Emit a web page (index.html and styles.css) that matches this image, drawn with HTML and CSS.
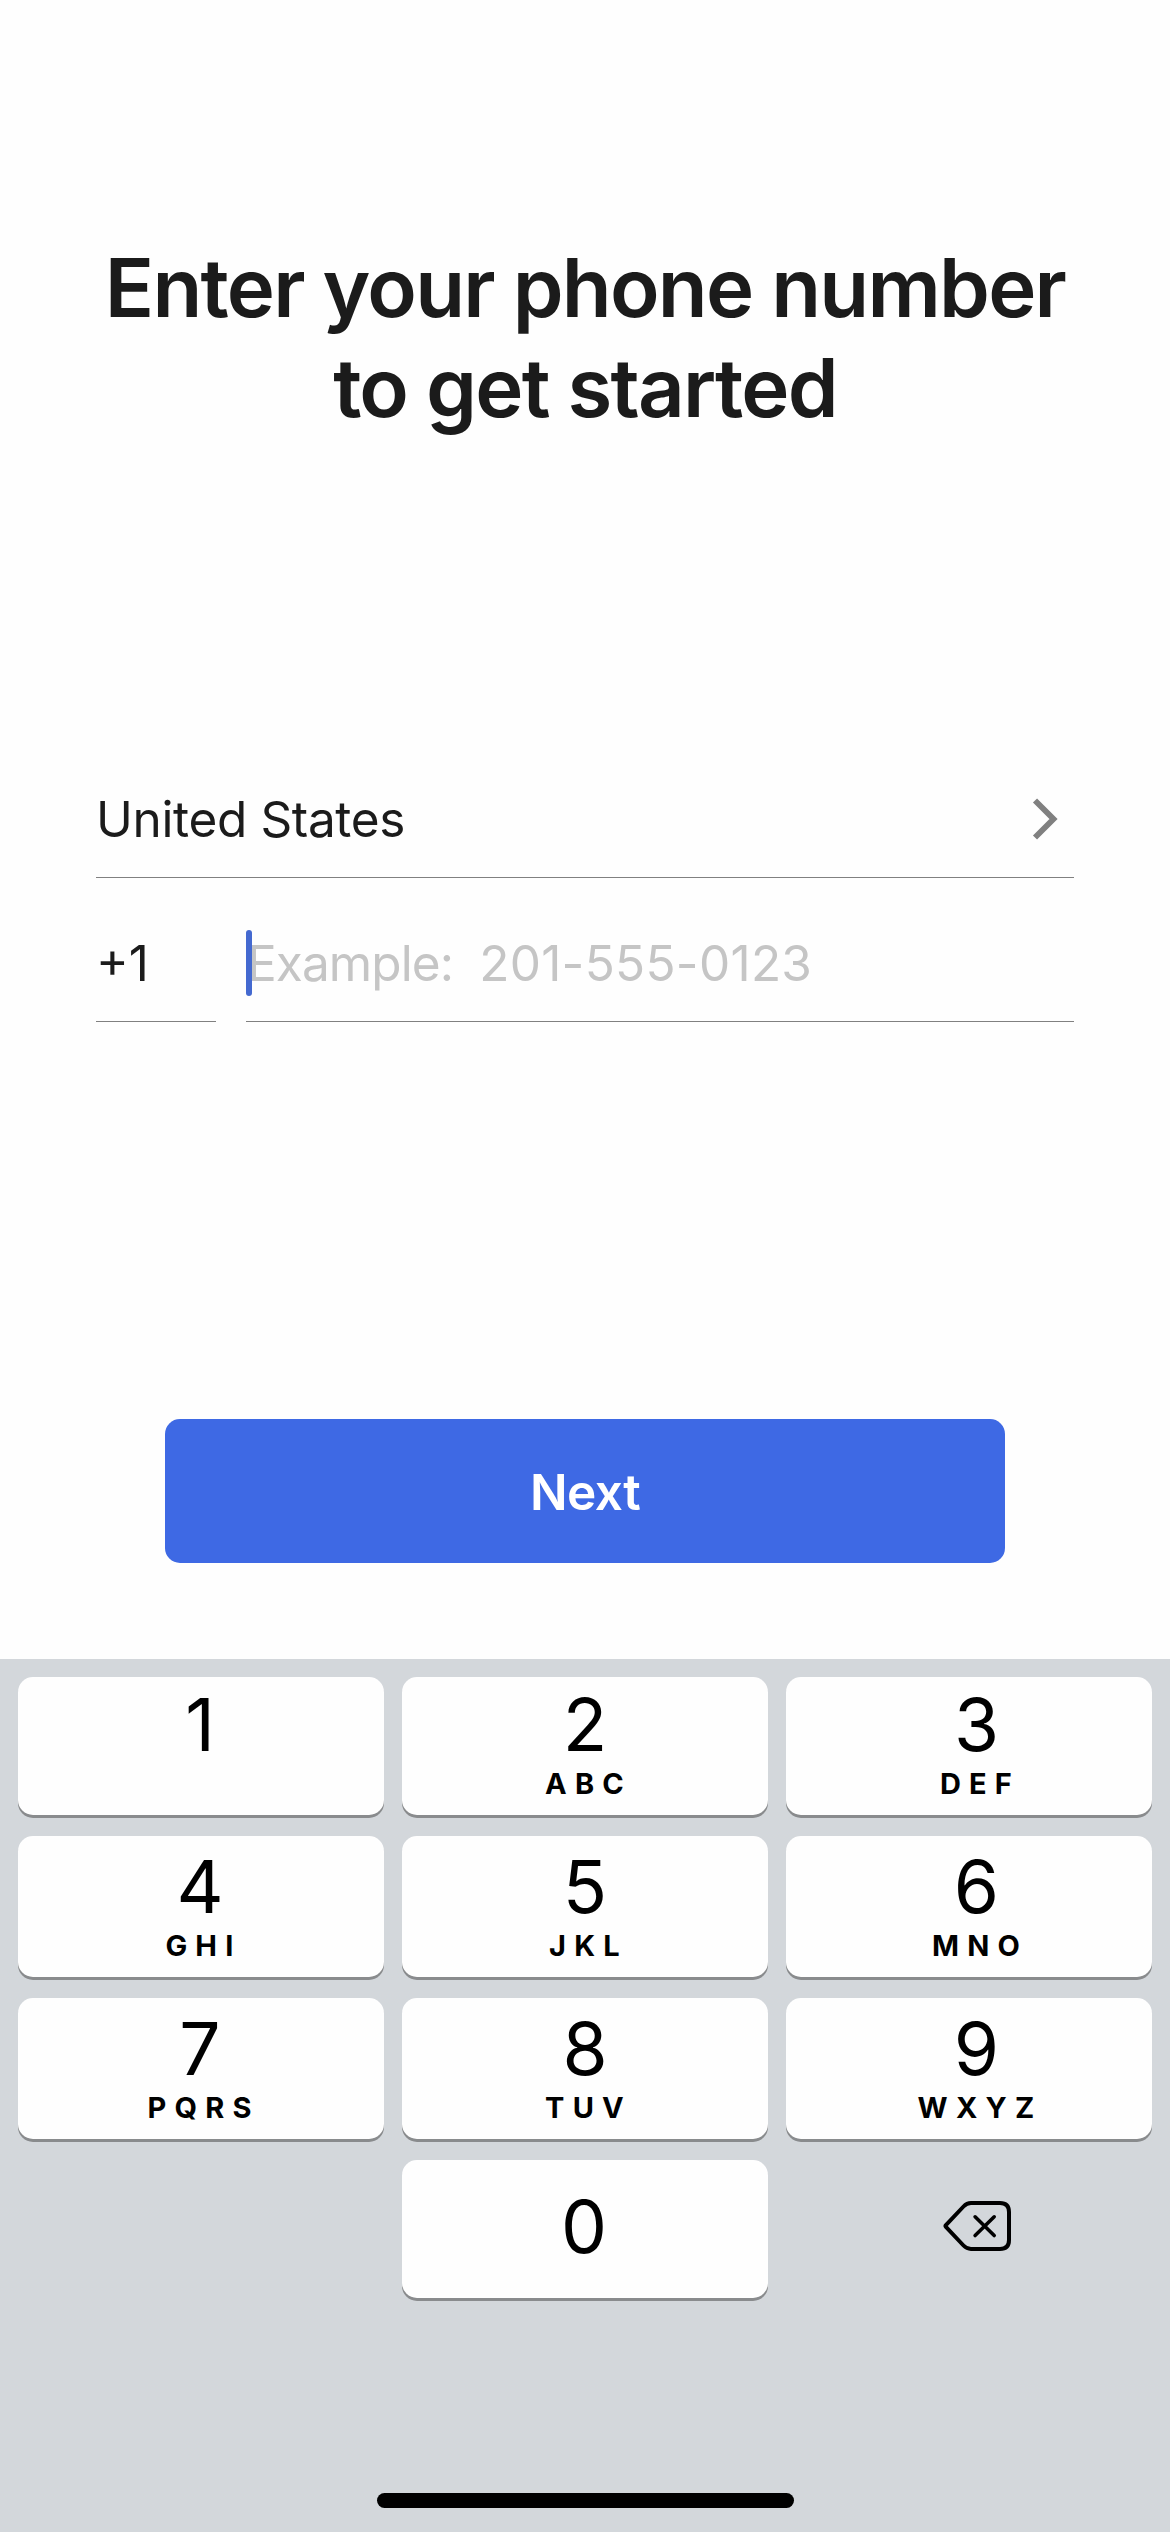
FILE: index.html
```html
<!DOCTYPE html>
<html lang="en">
<head>
<meta charset="utf-8">
<meta name="viewport" content="width=device-width">
<title>Phone number</title>
<link rel="stylesheet" href="styles.css">
</head>
<body>
<main class="screen">
  <h1 class="title">Enter your phone number<br>to get started</h1>
  <form class="form">
    <div class="field country">
      <span class="country-name">United States</span>
      <svg class="chevron" viewBox="0 0 26 42" width="26" height="42" aria-hidden="true"><path d="M3 2.5 21.500 21 3 39.500" fill="none" stroke="#808080" stroke-width="5.800"/></svg>
    </div>
    <div class="number-row">
      <div class="field code"><span class="code-text">+1</span></div>
      <div class="field number"><span class="caret"></span><span class="hint-label">Example:</span><span class="hint-number">201-555-0123</span></div>
    </div>
    <button class="next" type="button"><span class="next-text">Next</span></button>
  </form>
</main>
<section class="keyboard">
  <div class="keys">
    <div class="key left plain"><span class="digit">1</span></div>
    <div class="key"><span class="digit">2</span><span class="letters">ABC</span></div>
    <div class="key right"><span class="digit">3</span><span class="letters">DEF</span></div>
    <div class="key left"><span class="digit">4</span><span class="letters">GHI</span></div>
    <div class="key"><span class="digit">5</span><span class="letters">JKL</span></div>
    <div class="key right"><span class="digit">6</span><span class="letters">MNO</span></div>
    <div class="key left"><span class="digit">7</span><span class="letters">PQRS</span></div>
    <div class="key"><span class="digit">8</span><span class="letters">TUV</span></div>
    <div class="key right"><span class="digit">9</span><span class="letters">WXYZ</span></div>
    <div class="blank"></div>
    <div class="key zero"><span class="digit">0</span></div>
    <div class="delete">
      <svg viewBox="0 0 70 52" width="70" height="52" aria-hidden="true"><path d="M3.900 24.100 21.500 5.500Q24.800 2 29 2H58Q67 2 67 11V39Q67 48 58 48H29Q24.800 48 21.500 44.500L3.900 25.900Q3.100 25 3.900 24.100Z" fill="none" stroke="#000" stroke-width="4" stroke-linejoin="round"/><path d="M33.100 15.800 52.200 34.500M52.200 15.800 33.100 34.500" fill="none" stroke="#000" stroke-width="3.600" stroke-linecap="round"/></svg>
    </div>
  </div>
  <div class="home-bar"></div>
</section>
</body>
</html>
```
FILE: styles.css
```css
* { box-sizing: border-box; }

body {
  margin: 0;
  width: 1170px;
  height: 2532px;
  display: flex;
  flex-direction: column;
  background: #fefefe;
  color: #1b1b1b;
  font-family: Inter, "Liberation Sans", sans-serif;
}

.screen { height: 1659px; padding-top: 238px; }

.title {
  margin: 0;
  text-align: center;
  font-size: 81.5px;
  font-weight: 600;
  line-height: 100px;
  letter-spacing: -1.75px;
}

.form { padding: 320px 96px 0; }

.field {
  display: flex;
  align-items: center;
  height: 144px;
  padding-top: 26px;
  border-bottom: 1px solid #808080;
  font-size: 49.5px;
  line-height: 60px;
}

.country {
  height: 120px;
  justify-content: space-between;
  padding: 2px 16px 0 0;
  letter-spacing: -0.35px;
}

.number-row { display: flex; gap: 30px; }
.code { width: 120px; }
.number { flex: 1; color: #c5c5c5; }

.caret {
  position: relative;
  z-index: 1;
  width: 6px;
  height: 66px;
  border-radius: 3px;
  background: #4469d0;
}

.hint-label { margin-left: -5px; letter-spacing: -0.9px; }
.hint-number { margin-left: 26px; letter-spacing: 0.3px; }

.next {
  display: flex;
  align-items: center;
  justify-content: center;
  width: 840px;
  height: 144px;
  margin: 397px auto 0;
  padding: 2px 0 0;
  border: 0;
  border-radius: 15px;
  background: #3e69e4;
  color: #fff;
  font: 600 49.5px/60px Inter, "Liberation Sans", sans-serif;
  letter-spacing: -0.5px;
}

.keyboard {
  flex: 1;
  display: flex;
  flex-direction: column;
  justify-content: space-between;
  padding: 18px 18px 24px;
  background: #d3d7db;
  color: #000;
}

.keys {
  display: grid;
  grid-template-columns: repeat(3, 366px);
  grid-template-rows: 138px 141px 141px 138px;
  column-gap: 18px;
  row-gap: 21px;
}

.key {
  display: flex;
  flex-direction: column;
  align-items: center;
  justify-content: flex-end;
  padding-bottom: 14px;
  border-radius: 15px;
  background: #fefefe;
  box-shadow: 0 3px 0 #898b8d;
}

.left { padding-right: 2px; }
.right { padding-left: 15px; }
.plain { padding-bottom: 48px; }
.zero { padding-right: 2px; padding-bottom: 29px; }

.digit { height: 84px; line-height: 84px; font-size: 73px; }

.letters {
  height: 34px;
  margin-right: -7px;
  line-height: 34px;
  font-size: 29px;
  font-weight: 650;
  letter-spacing: 8.2px;
}

.delete {
  display: flex;
  align-items: center;
  justify-content: center;
  padding: 0 0 4px 16px;
}

.home-bar {
  align-self: center;
  width: 417px;
  height: 15px;
  border-radius: 8px;
  background: #000;
}
```
